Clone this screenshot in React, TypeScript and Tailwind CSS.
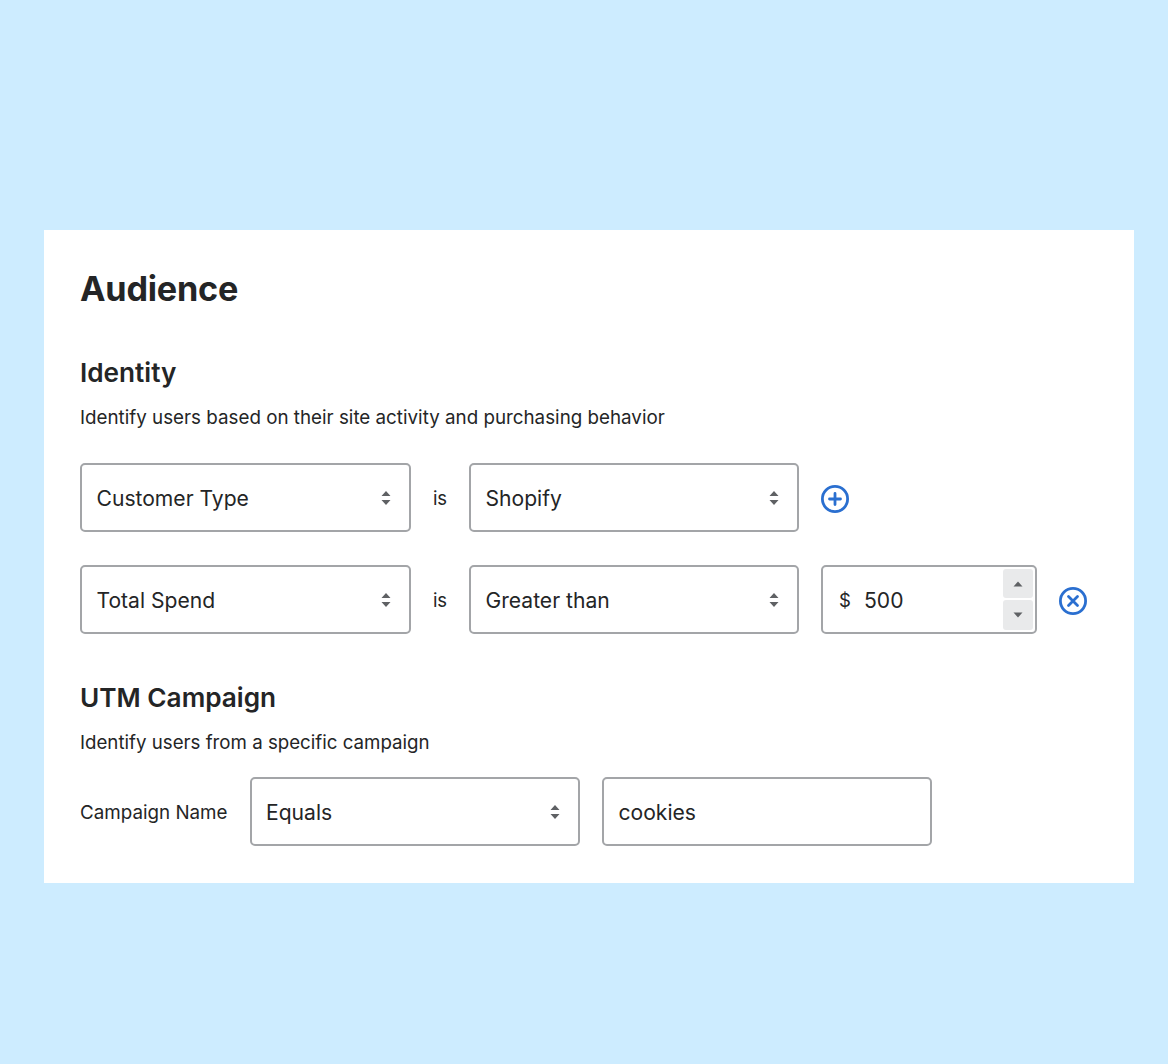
const font = { fontFamily: 'Inter, "Liberation Sans", sans-serif' }

function Select({ value, width = 'w-[330px]' }: { value: string; width?: string }) {
  return (
    <div className={`${width} h-[69px] flex items-center justify-between pl-[14.5px] pr-[18px] bg-white rounded-[5px] border-2 border-[#a3a5a8] text-[21.1px] text-[#242526]`}>
      <span className="mt-[2px]">{value}</span>
      <svg width="10" height="16" viewBox="0 0 10 16" className="text-[#5f6164]">
        <path d="M5 1 L9.5 6 H0.5 Z M5 15 L9.5 10 H0.5 Z" fill="currentColor" />
      </svg>
    </div>
  )
}

function CircleIcon({ type }: { type: 'plus' | 'x' }) {
  return (
    <svg width="30" height="30" viewBox="0 0 30 30" fill="none" stroke="#2a6fd0" strokeWidth="2.8" strokeLinecap="round">
      <circle cx="15" cy="15" r="12.6" />
      {type === 'plus' ? (
        <path d="M15 9.5 V20.5 M9.5 15 H20.5" />
      ) : (
        <path d="M10.5 10.5 L19.5 19.5 M19.5 10.5 L10.5 19.5" />
      )}
    </svg>
  )
}

export default function App() {
  return (
    <div className="min-h-[1064px] bg-[#cdecff] pt-[230px] pl-[44px]" style={font}>
      <div className="w-[1090px] h-[653px] bg-white pl-9 pt-[37px] text-[#242526]">
        <h1 className="text-[34.2px] leading-[44px] font-bold tracking-[-0.2px]">Audience</h1>

        <h2 className="mt-[44px] text-[26.2px] leading-[36px] font-semibold">Identity</h2>
        <p className="mt-[14px] text-[18.8px] leading-[26px]">Identify users based on their site activity and purchasing behavior</p>

        <div className="mt-[32px] flex items-center">
          <Select value="Customer Type" width="w-[331px]" />
          <span className="mt-[2px] w-[58px] text-center text-[18.5px]">is</span>
          <Select value="Shopify" />
          <div className="mt-[2px] ml-[21px] flex"><CircleIcon type="plus" /></div>
        </div>

        <div className="mt-[33px] flex items-center">
          <Select value="Total Spend" width="w-[331px]" />
          <span className="mt-[2px] w-[58px] text-center text-[18.5px]">is</span>
          <Select value="Greater than" />
          <div className="ml-[22px] w-[216px] h-[69px] flex items-center justify-between pl-4 pr-[2px] bg-white rounded-[5px] border-2 border-[#a3a5a8] text-[21.1px]">
            <div className="mt-[2px] flex items-center">
              <span className="text-[18.5px] w-[25px]">$</span>
              <span>500</span>
            </div>
            <div className="flex flex-col gap-[2px]">
              <div className="w-[30px] h-[29px] rounded-[3px] bg-[#e9eaeb] flex items-center justify-center">
                <svg width="10" height="6" viewBox="0 0 10 6"><path d="M5 0.5 L9.5 5.5 H0.5 Z" fill="#5f6164" /></svg>
              </div>
              <div className="w-[30px] h-[30px] rounded-[3px] bg-[#e9eaeb] flex items-center justify-center">
                <svg width="10" height="6" viewBox="0 0 10 6"><path d="M5 5.5 L9.5 0.5 H0.5 Z" fill="#5f6164" /></svg>
              </div>
            </div>
          </div>
          <div className="mt-[2px] ml-[21px] flex"><CircleIcon type="x" /></div>
        </div>

        <h2 className="mt-[46px] text-[26.2px] leading-[36px] font-semibold">UTM Campaign</h2>
        <p className="mt-[13.5px] text-[18.7px] leading-[26px]">Identify users from a specific campaign</p>

        <div className="mt-[21.5px] flex items-center">
          <span className="mt-[3px] w-[169.5px] text-[18.8px]">Campaign Name</span>
          <Select value="Equals" />
          <div className="ml-[22px] w-[330px] h-[69px] flex items-center pl-[15px] bg-white rounded-[5px] border-2 border-[#a3a5a8] text-[21.1px]">
            <span className="mt-[2px]">cookies</span>
          </div>
        </div>
      </div>
    </div>
  )
}
